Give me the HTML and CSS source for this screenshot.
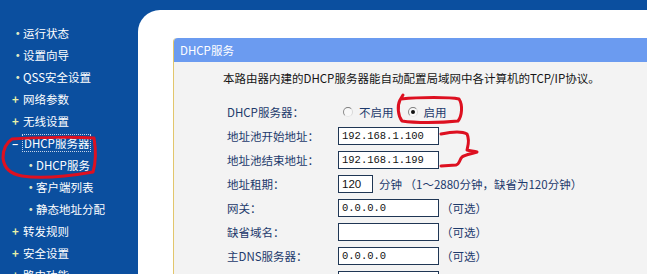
FILE: index.html
```html
<!DOCTYPE html>
<html lang="zh-CN">

<head>
  <meta charset="UTF-8">
  <title>DHCP服务</title>
  <link rel="stylesheet" href="styles.css">
</head>

<body>
  <div class="page">
    <ul class="menu">
      <li><i>•</i>运行状态</li>
      <li><i>•</i>设置向导</li>
      <li><i>•</i>QSS安全设置</li>
      <li class="group"><i>+</i>网络参数</li>
      <li class="group"><i>+</i>无线设置</li>
      <li class="group open"><i>–</i><span class="focus">DHCP服务器</span></li>
      <li class="sub"><i>•</i>DHCP服务</li>
      <li class="sub"><i>•</i>客户端列表</li>
      <li class="sub"><i>•</i>静态地址分配</li>
      <li class="group"><i>+</i>转发规则</li>
      <li class="group"><i>+</i>安全设置</li>
      <li class="group"><i>+</i>路由功能</li>
    </ul>

    <div class="main">
      <div class="panel">
        <div class="box">
          <div class="box-title">DHCP服务</div>
          <div class="box-body">
            <p class="intro">本路由器内建的DHCP服务器能自动配置局域网中各计算机的TCP/IP协议。</p>
            <div class="form">
              <label>DHCP服务器：</label>
              <div class="field">
                <span class="radio"></span><span>不启用</span>
                <span class="radio on"></span><span>启用</span>
              </div>

              <label>地址池开始地址：</label>
              <div class="field"><input class="ip" type="text" value="192.168.1.100"></div>

              <label>地址池结束地址：</label>
              <div class="field"><input class="ip" type="text" value="192.168.1.199"></div>

              <label>地址租期：</label>
              <div class="field">
                <input class="ip short" type="text" value="120">
                <span class="note">分钟 （1～2880分钟，缺省为120分钟）</span>
              </div>

              <label>网关：</label>
              <div class="field"><input class="ip" type="text" value="0.0.0.0"><span class="opt">（可选）</span></div>

              <label>缺省域名：</label>
              <div class="field"><input class="ip" type="text" value=""><span class="opt">（可选）</span></div>

              <label>主DNS服务器：</label>
              <div class="field"><input class="ip" type="text" value="0.0.0.0"><span class="opt">（可选）</span></div>

              <label>备用DNS服务器：</label>
              <div class="field"><input class="ip" type="text" value="0.0.0.0"><span class="opt">（可选）</span></div>
            </div>
          </div>
        </div>
      </div>
    </div>
  </div>

  <!-- 红笔标注 -->
  <svg class="marks" width="647" height="274" viewBox="0 0 647 274">
    <path d="M12 139 C40 137 80 137 94 138 C96 150 96 162 93 172 C70 176 40 179 22 176 C10 174 4 168 3 158 C3 150 6 143 12 139 Z" />
    <path d="M401 99 C420 97 450 97 459 99 C463 105 462 116 458 121 C440 123 415 123 402 121 C398 116 397 106 400 100 L403 95" />
    <path d="M441 134 C450 132 462 131 467 134 C470 140 468 146 467 150 C470 151 474 151 477 152 C472 154 466 154 462 157 C459 160 460 164 456 165 L441 166" />
  </svg>
</body>

</html>
```

FILE: styles.css
```css
* {
  margin: 0;
  padding: 0;
  box-sizing: border-box;
}

body {
  width: 647px;
  height: 274px;
  overflow: hidden;
  background: #0b4f9f;
  font-family: "Noto Sans CJK SC", sans-serif;
  font-size: 11.5px;
  position: relative;
}

.page {
  display: flex;
  height: 274px;
}

/* 左侧菜单 */
.menu {
  width: 138px;
  flex-shrink: 0;
  list-style: none;
  padding-top: 22px;
  color: #fff;
}

.menu li {
  height: 22px;
  line-height: 22px;
  display: flex;
  align-items: center;
  padding-left: 12px;
  white-space: nowrap;
}

.menu li i {
  font-style: normal;
  width: 11px;
  color: #dfe9c6;
  font-weight: bold;
}

.menu li.group i {
  color: #e9f1a8;
}

.menu li.open i {
  color: #fff;
}

.menu li.sub {
  padding-left: 25px;
}

.menu .focus {
  outline: 1px dotted #c8d4e6;
  line-height: 16px;
  padding: 0 1px;
}

/* 右侧内容 */
.main {
  flex: 1;
  padding-top: 10px;
}

.panel {
  height: 100%;
  background: #fff;
  border-top-left-radius: 22px;
  padding: 28px 0 0 35px;
}

.box {
  height: 100%;
  background: #f3f3f3;
  border-left: 1px solid #e2c66c;
  border-top-left-radius: 4px;
}

.box-title {
  height: 24px;
  line-height: 24px;
  padding-left: 6px;
  background: #6b9bf0;
  color: #fff;
  border-top-left-radius: 4px;
}

.box-body {
  padding-top: 8px;
}

.intro {
  padding-left: 49px;
  line-height: 16px;
  color: #151515;
  margin-bottom: 14px;
  white-space: nowrap;
}

.form {
  display: grid;
  grid-template-columns: 111px 1fr;
  grid-auto-rows: 24px;
  padding-left: 53px;
  color: #1d3a6c;
}

.form label {
  display: flex;
  align-items: center;
  white-space: nowrap;
}

.field {
  display: flex;
  align-items: center;
  white-space: nowrap;
}

.radio {
  width: 10px;
  height: 10px;
  border-radius: 50%;
  border: 1px solid;
  border-color: #7d7d7d #d8d8d8 #e6e6e6 #8a8a8a;
  background: #f8f8f8;
  margin: 0 6px 0 5px;
  position: relative;
}

.radio.on {
  margin-left: 14px;
}

.radio.on::after {
  content: "";
  position: absolute;
  left: 2px;
  top: 2px;
  width: 4px;
  height: 4px;
  border-radius: 50%;
  background: #111;
}

.ip {
  width: 101px;
  height: 18px;
  border: 1px solid #1f3654;
  background: #fff;
  padding-left: 3px;
  font-family: "Liberation Mono", monospace;
  font-size: 10.5px;
  color: #111;
  outline: none;
}

.ip.short {
  width: 35px;
  font-family: "Liberation Sans", sans-serif;
  font-size: 11.5px;
}

.note {
  margin-left: 6px;
}

.opt {
  margin-left: 2px;
}

/* 标注 */
.marks {
  position: absolute;
  left: 0;
  top: 0;
  pointer-events: none;
}

.marks path {
  fill: none;
  stroke: #dd1020;
  stroke-width: 3;
  stroke-linecap: round;
  stroke-linejoin: round;
}
```
